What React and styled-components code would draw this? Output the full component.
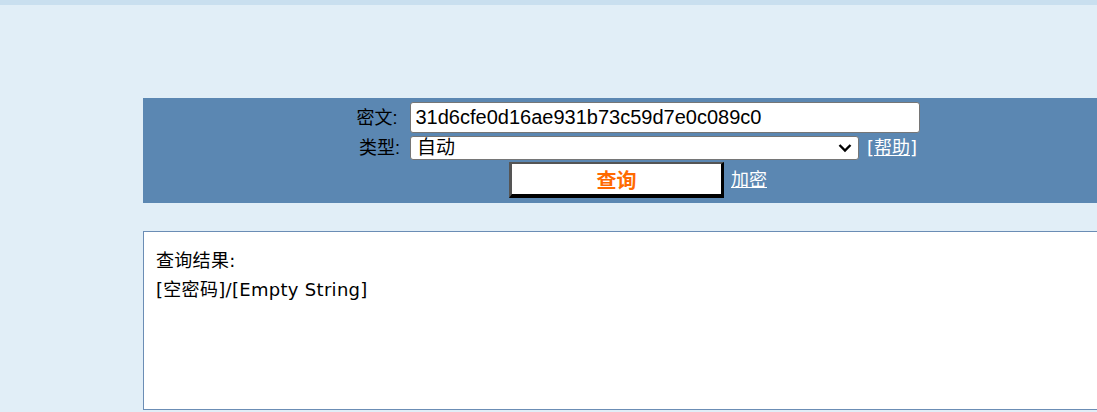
import React from 'react';
import styled, { createGlobalStyle } from 'styled-components';

const GlobalStyle = createGlobalStyle`
  html, body {
    margin: 0;
    padding: 0;
    background: #e1eef7;
    overflow: hidden;
  }
  body {
    font-family: "Liberation Sans", "Noto Sans CJK SC", sans-serif;
    color: #000;
  }
`;

const TopStrip = styled.div`
  height: 5px;
  background: #c9dfef;
`;

const Wrap = styled.div`
  width: 990px;
  margin-left: 143px;
  padding-top: 93px;
`;

const SearchPanel = styled.form`
  background: #5b87b2;
  padding: 4px 0 5px;
  display: flex;
  flex-direction: column;
  align-items: center;
`;

const Row = styled.div`
  display: flex;
  align-items: center;
  justify-content: center;
  gap: ${p => p.gap || 8}px;
  margin-top: ${p => p.top || 0}px;
`;

const Label = styled.label`
  font-size: 18px;
  line-height: 24px;
  width: 43px;
`;

const TextInput = styled.input`
  box-sizing: border-box;
  width: 510px;
  height: 31px;
  padding: 0 5px;
  border: 1px solid #767676;
  border-radius: 3px;
  background: #fff;
  font-family: "Liberation Sans", sans-serif;
  font-size: 20px;
  color: #000;
  outline: none;
`;

const SelectBox = styled.div`
  position: relative;
  width: 449px;
  height: 24px;
`;

const Select = styled.select`
  appearance: none;
  box-sizing: border-box;
  width: 100%;
  height: 24px;
  padding: 0 30px 0 6px;
  border: 1px solid #767676;
  border-radius: 3px;
  background: #fff;
  font-family: "Liberation Sans", "Noto Sans CJK SC", sans-serif;
  font-size: 19px;
  line-height: 22px;
  color: #000;
  outline: none;
`;

const Chevron = styled.svg`
  position: absolute;
  right: 7px;
  top: 7px;
  pointer-events: none;
`;

const Link = styled.a`
  color: #fff;
  font-family: "DejaVu Sans", "Noto Sans CJK SC", sans-serif;
  font-size: 18px;
  line-height: 24px;
  text-decoration: underline;
  cursor: pointer;
`;

const SubmitButton = styled.button`
  box-sizing: border-box;
  width: 215px;
  height: 36px;
  background: #fff;
  border-style: solid;
  border-width: 2px 3px 4px 3px;
  border-color: #555 #000 #000 #555;
  color: #ff6a00;
  font-family: "Noto Sans CJK SC", sans-serif;
  font-weight: bold;
  font-size: 20px;
  padding: 0;
  cursor: pointer;
`;

const ResultBox = styled.div`
  box-sizing: border-box;
  height: 179px;
  margin-top: 28px;
  background: #fff;
  border: 1px solid #6b8db5;
  padding: 14px 12px;
  font-family: "DejaVu Sans", "Noto Sans CJK SC", sans-serif;
  font-size: 18px;
  line-height: 29px;
  letter-spacing: 0.3px;
`;

export default function App() {
  return (
    <>
      <GlobalStyle />
      <TopStrip />
      <Wrap>
        <SearchPanel onSubmit={e => e.preventDefault()}>
          <Row gap={10}>
            <Label>密文:</Label>
            <TextInput defaultValue="31d6cfe0d16ae931b73c59d7e0c089c0" />
          </Row>
          <Row gap={8} top={3}>
            <Label>类型:</Label>
            <SelectBox>
              <Select defaultValue="auto">
                <option value="auto">自动</option>
              </Select>
              <Chevron width="14" height="10" viewBox="0 0 14 10">
                <path d="M1.5 2 L7 7.5 L12.5 2" fill="none" stroke="#000" strokeWidth="2.4" />
              </Chevron>
            </SelectBox>
            <Link>[帮助]</Link>
          </Row>
          <Row gap={7} top={2}>
            <SubmitButton type="submit">查询</SubmitButton>
            <Link>加密</Link>
          </Row>
        </SearchPanel>
        <ResultBox>
          查询结果:
          <br />
          [空密码]/[Empty String]
        </ResultBox>
      </Wrap>
    </>
  );
}
